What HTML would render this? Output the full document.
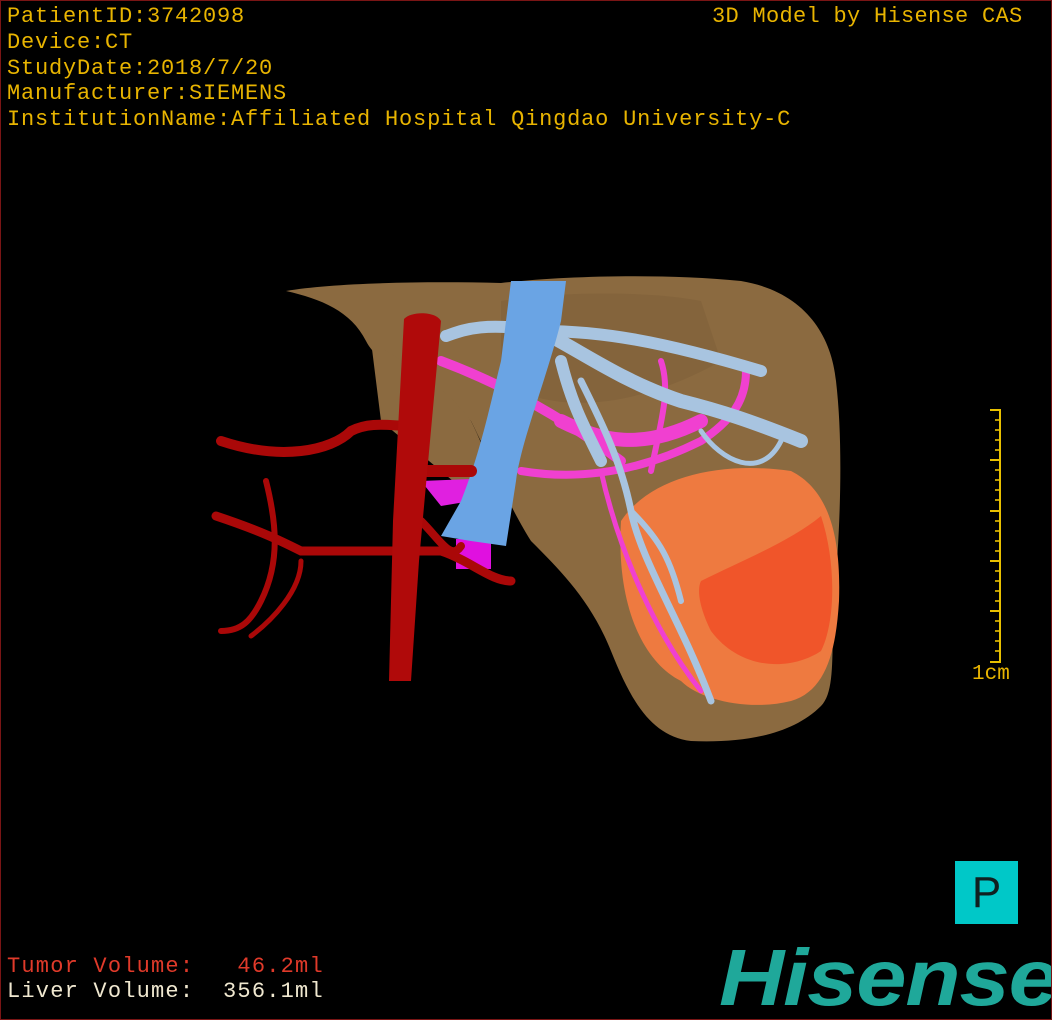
<!DOCTYPE html>
<html><head><meta charset="utf-8"><style>
html,body{margin:0;padding:0;background:#000}
#c{position:relative;width:1050px;height:1018px;border:1px solid #7a1515;background:#000;overflow:hidden;font-family:"Liberation Mono","Noto Sans CJK SC",monospace}
.t{position:absolute;color:#e8b400;font-size:22px;line-height:25px;white-space:nowrap;letter-spacing:0.8px}
.r{color:#e03a2a}
.w{color:#f0e8d0}
svg{position:absolute;left:0;top:0}
</style></head><body><div id="c">
<svg width="1050" height="1018" viewBox="0 0 1050 1018">
<path d="M285,290 C330,282 420,280 500,282 C560,275 660,272 740,280 C800,290 830,330 835,380 C842,440 840,520 833,600 C830,650 835,690 820,705 C790,735 740,742 690,740 C650,735 630,700 610,650 C590,600 560,570 530,540 C505,500 495,470 470,420 C440,390 380,370 365,340 C350,310 320,298 285,290 Z" fill="#8b6a40"/>
<path d="M370,340 C400,360 440,380 470,420 C490,460 500,500 500,520 L440,470 L380,420 Z" fill="#8b6a40"/>
<path d="M500,300 C560,290 650,290 700,300 L720,360 C650,400 560,420 500,380 Z" fill="#7a5c36" opacity="0.4"/>
<path d="M620,520 C650,475 720,460 790,470 C830,490 840,540 838,600 C835,650 825,690 790,700 C750,710 700,700 680,680 C640,660 615,600 620,520 Z" fill="#ee7a40"/>
<path d="M700,580 C740,560 790,540 820,515 C835,560 835,620 820,650 C790,670 740,670 710,630 C700,610 695,590 700,580 Z" fill="#f0552a"/>
<g stroke="#f040d0" fill="none" stroke-linecap="round">
<path d="M440,360 C520,390 580,430 620,460" stroke-width="10"/>
<path d="M520,470 C580,480 640,470 700,440 C730,420 745,400 745,370" stroke-width="8"/>
<path d="M600,470 C620,560 660,640 700,690" stroke-width="5"/>
<path d="M650,470 C660,420 670,390 660,360" stroke-width="6"/>
<path d="M560,420 C600,440 640,450 700,420" stroke-width="14"/>
</g>
<path d="M420,480 L470,478 L470,500 L440,505 Z" fill="#e020e0"/>
<rect x="455" y="538" width="35" height="30" fill="#e010e0"/>
<g stroke="#a8c4e0" fill="none" stroke-linecap="round">
<path d="M540,330 C580,350 620,380 680,400 C720,410 750,420 800,440" stroke-width="14"/>
<path d="M540,330 C600,330 660,340 760,370" stroke-width="12"/>
<path d="M540,330 C480,320 460,330 445,335" stroke-width="12"/>
<path d="M580,380 C600,420 620,460 630,510 C640,560 680,620 710,700" stroke-width="7"/>
<path d="M630,510 C660,540 670,560 680,600" stroke-width="6"/>
<path d="M700,430 C720,460 760,480 780,440" stroke-width="5"/>
<path d="M560,360 C570,400 580,420 600,460" stroke-width="12"/>
</g>
<path d="M510,280 L565,280 L560,320 C545,380 520,440 515,480 L505,545 L470,540 L440,535 L460,500 C480,450 490,400 500,360 Z" fill="#6aa4e4"/>
<g stroke="#aa0808" fill="none" stroke-linecap="round">
<path d="M220,440 C280,460 330,450 350,430 C370,420 390,425 410,425" stroke-width="10"/>
<path d="M215,515 C260,530 280,540 300,550 L380,550 L440,550 C470,560 490,580 510,580" stroke-width="9"/>
<path d="M265,480 C275,520 280,560 260,600 C250,620 240,630 220,630" stroke-width="6"/>
<path d="M300,560 C300,590 270,620 250,635" stroke-width="5"/>
<path d="M420,470 L470,470" stroke-width="12"/>
<path d="M420,520 C440,540 450,560 460,545" stroke-width="8"/>
</g>
<path d="M403,318 C410,310 435,310 440,320 L418,560 L410,680 L388,680 L392,520 Z" fill="#b00a0a"/>
<g stroke="#e8c000" stroke-width="2">
<line x1="999" y1="408" x2="999" y2="662"/>
<line x1="989" y1="409" x2="999" y2="409"/>
<line x1="989" y1="459" x2="999" y2="459"/>
<line x1="989" y1="510" x2="999" y2="510"/>
<line x1="989" y1="560" x2="999" y2="560"/>
<line x1="989" y1="610" x2="999" y2="610"/>
<line x1="989" y1="661" x2="999" y2="661"/>
<g stroke-width="1.6">
<line x1="994" y1="419" x2="999" y2="419"/><line x1="994" y1="429" x2="999" y2="429"/><line x1="994" y1="439" x2="999" y2="439"/><line x1="994" y1="449" x2="999" y2="449"/>
<line x1="994" y1="469" x2="999" y2="469"/><line x1="994" y1="479" x2="999" y2="479"/><line x1="994" y1="489" x2="999" y2="489"/><line x1="994" y1="499" x2="999" y2="499"/>
<line x1="994" y1="520" x2="999" y2="520"/><line x1="994" y1="530" x2="999" y2="530"/><line x1="994" y1="540" x2="999" y2="540"/><line x1="994" y1="550" x2="999" y2="550"/>
<line x1="994" y1="570" x2="999" y2="570"/><line x1="994" y1="580" x2="999" y2="580"/><line x1="994" y1="590" x2="999" y2="590"/><line x1="994" y1="600" x2="999" y2="600"/>
<line x1="994" y1="620" x2="999" y2="620"/><line x1="994" y1="630" x2="999" y2="630"/><line x1="994" y1="640" x2="999" y2="640"/><line x1="994" y1="650" x2="999" y2="650"/>
</g></g>
</svg>
<div class="t" style="left:6px;top:3px">PatientID:3742098</div>
<div class="t" style="left:6px;top:29px">Device:CT</div>
<div class="t" style="left:6px;top:55px">StudyDate:2018/7/20</div>
<div class="t" style="left:6px;top:80px">Manufacturer:SIEMENS</div>
<div class="t" style="left:6px;top:106px">InstitutionName:Affiliated Hospital Qingdao University-C</div>
<div class="t" style="left:711px;top:3px;letter-spacing:0.3px">3D Model by Hisense CAS</div>
<div class="t" style="left:971px;top:661px;font-size:21px;letter-spacing:0">1cm</div>
<div class="t r" style="left:6px;top:953px;letter-spacing:1.2px">Tumor Volume:&nbsp;&nbsp; 46.2ml</div>
<div class="t w" style="left:6px;top:978px;letter-spacing:1.2px">Liver Volume:&nbsp; 356.1ml</div>
<div style="position:absolute;left:954px;top:860px;width:63px;height:63px;background:#00c8c8;color:#102020;font-size:44px;line-height:63px;text-align:center;font-family:'Liberation Sans',sans-serif">P</div>
<div style="position:absolute;left:718px;top:937px;color:#1fa89a;font-size:80px;font-weight:bold;font-style:italic;line-height:80px;letter-spacing:-1px;font-family:'Liberation Sans',sans-serif;transform:scaleX(1.13);transform-origin:0 0">Hisense</div>
</div></body></html>
